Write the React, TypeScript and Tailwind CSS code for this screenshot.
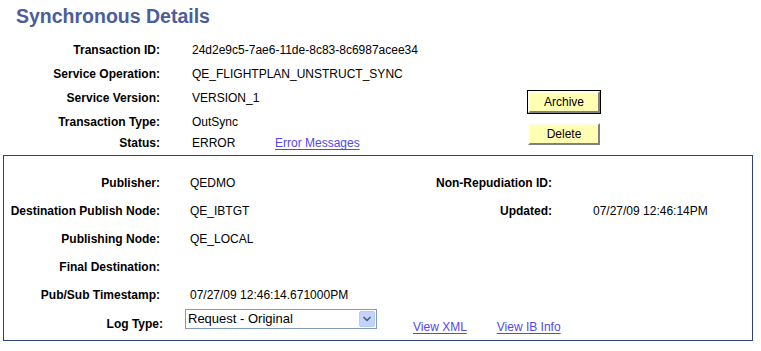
import { ChevronDown } from 'lucide-react';

const TOP_ROWS: { label: string; value: string; h: string }[] = [
  { label: 'Transaction ID:', value: '24d2e9c5-7ae6-11de-8c83-8c6987acee34', h: 'h-6' },
  { label: 'Service Operation:', value: 'QE_FLIGHTPLAN_UNSTRUCT_SYNC', h: 'h-6' },
  { label: 'Service Version:', value: 'VERSION_1', h: 'h-6' },
  { label: 'Transaction Type:', value: 'OutSync', h: 'h-6' },
];

const linkCls = 'text-[#5447e6] underline underline-offset-2';

function PsButton({ label, isDefault }: { label: string; isDefault?: boolean }) {
  return (
    <button
      type="button"
      className={`w-[72px] h-[22px] text-[12px] text-black bg-[#ffffb3] border-2 border-t-[#fdfde8] border-l-[#fdfde8] border-r-[#808080] border-b-[#808080] ${
        isDefault ? 'outline outline-1 outline-black' : ''
      }`}
    >
      {label}
    </button>
  );
}

export default function App() {
  return (
    <div className="w-[761px] h-[351px] bg-white text-black text-[12px] font-['Liberation_Sans',Arial,sans-serif] overflow-hidden">
      <h1 className="h-7 mt-[2px] pl-4 text-[19.5px] leading-7 font-bold text-[#4b5d9a]">
        Synchronous Details
      </h1>

      <div className="flex mt-2">
        <div className="flex flex-col w-[522px]">
          {TOP_ROWS.map((r) => (
            <div key={r.label} className={`flex items-center ${r.h}`}>
              <span className="w-[160px] text-right font-bold">{r.label}</span>
              <span className="ml-8">{r.value}</span>
            </div>
          ))}
          <div className="flex items-center h-[18px]">
            <span className="w-[160px] text-right font-bold">Status:</span>
            <span className="ml-8 w-[83px]">ERROR</span>
            <a href="#" className={linkCls}>Error Messages</a>
          </div>
        </div>
        <div className="flex flex-col gap-[10px] ml-[6px] mt-[53px]">
          <PsButton label="Archive" isDefault />
          <PsButton label="Delete" />
        </div>
      </div>

      <div className="ml-[3px] mt-[3px] w-[750px] h-[186px] border border-[#2f4479] pt-[13px]">
        <div className="grid grid-cols-[156px_186px_206px_1fr] auto-rows-[28px] items-center whitespace-nowrap">
          <span className="text-right font-bold">Publisher:</span>
          <span className="pl-[30px]">QEDMO</span>
          <span className="text-right font-bold">Non-Repudiation ID:</span>
          <span />

          <span className="text-right font-bold">Destination Publish Node:</span>
          <span className="pl-[30px]">QE_IBTGT</span>
          <span className="text-right font-bold">Updated:</span>
          <span className="pl-[41px]">07/27/09 12:46:14PM</span>

          <span className="text-right font-bold">Publishing Node:</span>
          <span className="pl-[30px]">QE_LOCAL</span>
          <span />
          <span />

          <span className="text-right font-bold">Final Destination:</span>
          <span />
          <span />
          <span />

          <span className="text-right font-bold">Pub/Sub Timestamp:</span>
          <span className="pl-[30px]">07/27/09 12:46:14.671000PM</span>
          <span />
          <span />
        </div>
        <div className="flex h-[30px]">
          <span className="w-[159px] text-right font-bold pt-[6px]">Log Type:</span>
          <div className="ml-[22px] w-[192px] h-[20px] border border-[#7f9db9] flex items-center justify-between pl-[2px] pr-[1px]">
            <span className="text-[13px]">Request - Original</span>
            <span className="w-[16px] h-[16px] rounded-[2px] bg-[#c3d3fd] border border-[#b7c9f5] flex items-center justify-center">
              <ChevronDown size={12} strokeWidth={3.5} className="text-[#4d6185]" />
            </span>
          </div>
          <a href="#" className={`${linkCls} ml-[36px] pt-[9px]`}>View XML</a>
          <a href="#" className={`${linkCls} ml-[30px] pt-[9px]`}>View IB Info</a>
        </div>
      </div>
    </div>
  );
}
